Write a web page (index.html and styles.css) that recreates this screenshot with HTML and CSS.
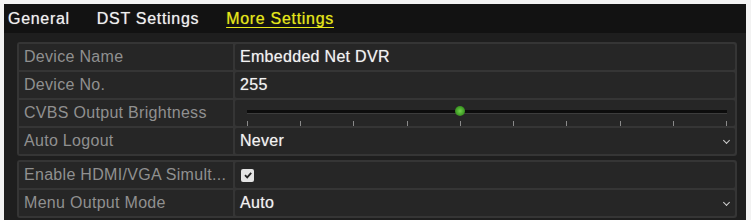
FILE: index.html
```html
<!DOCTYPE html>
<html lang="en">
<head>
    <meta charset="UTF-8">
    <title>More Settings</title>
    <link rel="stylesheet" href="styles.css">
</head>
<body>
    <div class="panel">
        <div class="tabs">
            <span class="tab">General</span>
            <span class="tab">DST Settings</span>
            <span class="tab active">More Settings</span>
        </div>
        <div class="content">
            <div class="group">
                <div class="label">Device Name</div>
                <div class="value">Embedded Net DVR</div>
                <div class="label">Device No.</div>
                <div class="value">255</div>
                <div class="label">CVBS Output Brightness</div>
                <div class="value slider-cell">
                    <div class="track">
                        <span class="knob"></span>
                    </div>
                    <div class="ticks">
                        <i></i><i></i><i></i><i></i><i></i><i></i><i></i><i></i><i></i><i></i>
                    </div>
                </div>
                <div class="label">Auto Logout</div>
                <div class="value select">Never<span class="caret"></span></div>
            </div>
            <div class="group">
                <div class="label">Enable HDMI/VGA Simult...</div>
                <div class="value">
                    <span class="checkbox">
                        <svg width="10" height="10" viewBox="0 0 10 10"><path d="M2 5.2 L4.2 7.4 L8.2 2.8" fill="none" stroke="#222" stroke-width="1.8"/></svg>
                    </span>
                </div>
                <div class="label">Menu Output Mode</div>
                <div class="value select">Auto<span class="caret"></span></div>
            </div>
        </div>
    </div>
</body>
</html>
```

FILE: styles.css
```css
body { margin: 0; background-color: #f2f2f2; font-family: "Liberation Sans", Arial, sans-serif; }
.panel { margin: 4px 5px 0 4px; height: 216px; background-color: #1e1e1e; overflow: hidden; }
.tabs { display: flex; align-items: center; height: 29px; background-color: #121212; padding-left: 4px; }
.tab { font-size: 16px; letter-spacing: 0.7px; color: #f0f0f0; margin-right: 27px; text-shadow: 0 0 1px rgba(255,255,255,0.6); padding-top: 1px; }
.tab.active { color: #e6e81a; text-decoration: underline; text-underline-offset: 3px; text-shadow: 0 0 1px rgba(230,232,26,0.6); }
.content { padding: 9px 9px 0 13px; }
.group { display: grid; grid-template-columns: 214px 1fr; gap: 2px; padding: 2px; background-color: #353535; border-radius: 3px; margin-bottom: 4px; }
.label, .value { height: 26px; display: flex; align-items: center; background-color: #262626; font-size: 16px; letter-spacing: 0.3px; }
.label { color: #909090; padding-left: 5px; white-space: nowrap; overflow: hidden; }
.value { color: #f2f2f2; padding-left: 5px; text-shadow: 0 0 1px rgba(255,255,255,0.5); border-radius: 2px; }
.select { justify-content: space-between; padding-right: 6px; }
.caret { width: 4px; height: 4px; border-right: 1.5px solid #d0d0d0; border-bottom: 1.5px solid #d0d0d0; transform: rotate(45deg); margin-top: -2px; }
.slider-cell { flex-direction: column; align-items: stretch; justify-content: flex-start; padding: 0 8px 0 12px; }
.track { position: relative; height: 3px; background-color: #0c0c0c; border-bottom: 1px solid #3c3c3c; margin-top: 10px; }
.knob { position: absolute; left: 44.44%; top: -4px; width: 10px; height: 10px; margin-left: -5px; border-radius: 50%; background: radial-gradient(circle, #6fd24a 0%, #3f9a25 60%, #2a5e1a 100%); }
.ticks { display: flex; justify-content: space-between; margin-top: 7px; }
.ticks i { width: 1px; height: 5px; background-color: #8a8a8a; }
.checkbox { width: 13px; height: 13px; background-color: #e4e4e4; border-radius: 2px; display: flex; align-items: center; justify-content: center; margin-left: 1px; }
```
